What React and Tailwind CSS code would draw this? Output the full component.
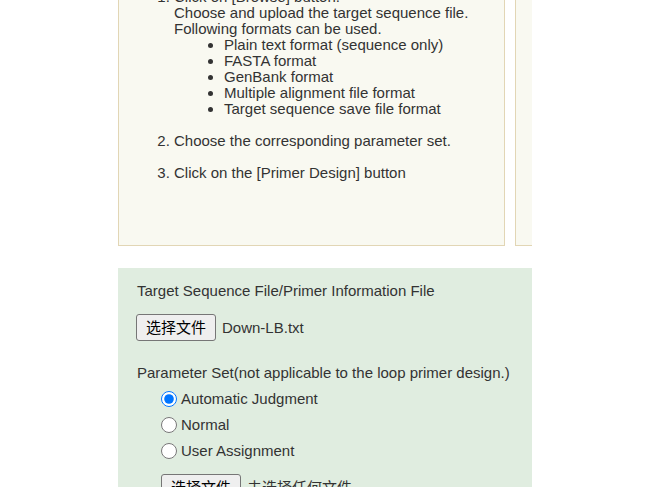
const formats = [
  "Plain text format (sequence only)",
  "FASTA format",
  "GenBank format",
  "Multiple alignment file format",
  "Target sequence save file format",
];

const params = ["Automatic Judgment", "Normal", "User Assignment"];

const FileButton = ({ name }) => (
  <div className="flex items-center">
    <button className="h-[27px] px-[9px] border border-[#767676] bg-[#efefef] rounded-[3px] text-[15px] leading-none text-black font-['Liberation_Sans','Noto_Sans_CJK_SC',sans-serif]">
      选择文件
    </button>
    <span className="ml-[6px] font-['Liberation_Sans','Noto_Sans_CJK_SC',sans-serif]">
      {name}
    </span>
  </div>
);

const App = () => {
  return (
    <div className="min-h-[487px] bg-white text-[#333] text-[15px] leading-[16px] font-['Liberation_Sans',Arial,sans-serif]">
      <div className="ml-[118px] w-[414px] overflow-hidden -mt-[20px]">
        <div className="flex gap-[10px] h-[266px]">
          <div className="w-[387px] shrink-0 h-full border border-[#e2d6b5] bg-[#f9f9f1] pt-[8px] pl-[15px]">
            <ol className="list-decimal pl-[40px]">
              <li>
                Click on [Browse] button.
                <br />
                Choose and upload the target sequence file.
                <br />
                Following formats can be used.
                <ul className="list-disc pl-[50px]">
                  {formats.map((f, i) => (
                    <li key={i}>{f}</li>
                  ))}
                </ul>
              </li>
              <li className="mt-[16px]">Choose the corresponding parameter set.</li>
              <li className="mt-[16px]">Click on the [Primer Design] button</li>
            </ol>
          </div>
          <div className="w-[387px] shrink-0 h-full border border-[#e2d6b5] bg-[#f9f9f1]"></div>
        </div>
        <div className="mt-[22px] bg-[#e0ede0] pt-[15px] pl-[19px] pb-[20px] h-[260px]">
          <p>Target Sequence File/Primer Information File</p>
          <div className="mt-[15px] -ml-px">
            <FileButton name="Down-LB.txt" />
          </div>
          <p className="mt-[24px]">Parameter Set(not applicable to the loop primer design.)</p>
          <div className="mt-[5px] pl-[24px]">
            {params.map((p, i) => (
              <label key={i} className="flex items-center h-[26px]">
                <input
                  type="radio"
                  name="param"
                  defaultChecked={i === 0}
                  className="w-[16px] h-[16px] m-0 accent-[#0075ff]"
                />
                <span className="ml-[4px]">{p}</span>
              </label>
            ))}
            <div className="mt-[10px]">
              <FileButton name="未选择任何文件" />
            </div>
          </div>
        </div>
      </div>
    </div>
  );
};

export default App;
